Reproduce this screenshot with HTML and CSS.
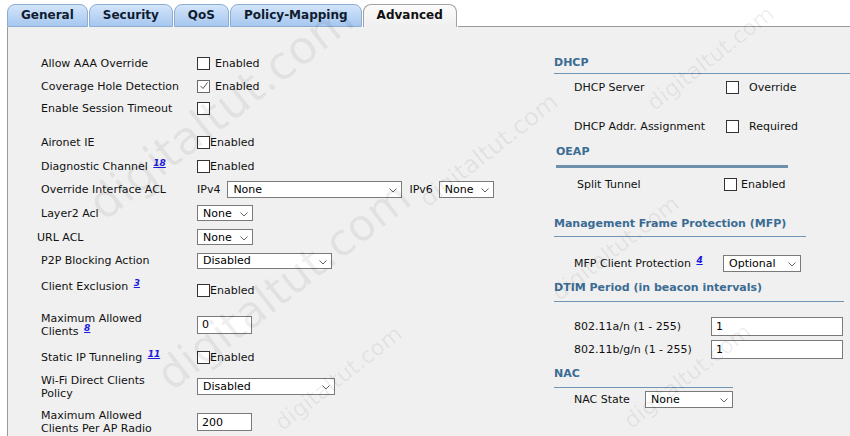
FILE: index.html
```html
<!DOCTYPE html>
<html lang="en">
<head>
    <meta charset="UTF-8">
    <title>WLAN Advanced</title>
    <link rel="stylesheet" href="styles.css">
</head>
<body>
<div class="screen">

    <!-- Tab strip -->
    <div class="tabs">
        <div class="tab">General</div>
        <div class="tab">Security</div>
        <div class="tab">QoS</div>
        <div class="tab">Policy-Mapping</div>
        <div class="tab active">Advanced</div>
        <div class="tab-rest"></div>
    </div>

    <div class="panel">

        <!-- Left column -->
        <div class="col-left">
            <div class="row h23">
                <div class="lbl">Allow AAA Override</div>
                <div class="ctl"><span class="cb"></span><span class="gap5">Enabled</span></div>
            </div>
            <div class="row h22">
                <div class="lbl">Coverage Hole Detection</div>
                <div class="ctl"><span class="cb checked"><svg width="10" height="10" viewBox="0 0 10 10"><path d="M1.5 5 L4 7.5 L8.5 1.5" fill="none" stroke="#555" stroke-width="1"/></svg></span><span class="gap5">Enabled</span></div>
            </div>
            <div class="row h22">
                <div class="lbl">Enable Session Timeout</div>
                <div class="ctl"><span class="cb"></span></div>
            </div>

            <div class="row h23 spaced">
                <div class="lbl">Aironet IE</div>
                <div class="ctl"><span class="cb"></span>Enabled</div>
            </div>
            <div class="row h24">
                <div class="lbl">Diagnostic Channel <a class="ref" href="#">18</a></div>
                <div class="ctl"><span class="cb"></span>Enabled</div>
            </div>
            <div class="row h23">
                <div class="lbl">Override Interface ACL</div>
                <div class="ctl">
                    <span class="tag">IPv4</span>
                    <span class="sel w175"><select><option>None</option></select><svg class="caret" width="8" height="5" viewBox="0 0 8 5"><path d="M0.5 0.5 L4 4 L7.5 0.5" fill="none" stroke="#666"/></svg></span>
                    <span class="tag tag6">IPv6</span>
                    <span class="sel w55"><select><option>None</option></select><svg class="caret" width="8" height="5" viewBox="0 0 8 5"><path d="M0.5 0.5 L4 4 L7.5 0.5" fill="none" stroke="#666"/></svg></span>
                </div>
            </div>
            <div class="row h24">
                <div class="lbl">Layer2 Acl</div>
                <div class="ctl"><span class="sel w56 short"><select><option>None</option></select><svg class="caret" width="8" height="5" viewBox="0 0 8 5"><path d="M0.5 0.5 L4 4 L7.5 0.5" fill="none" stroke="#666"/></svg></span></div>
            </div>
            <div class="row h24">
                <div class="lbl lbl-url">URL ACL</div>
                <div class="ctl"><span class="sel w56 short"><select><option>None</option></select><svg class="caret" width="8" height="5" viewBox="0 0 8 5"><path d="M0.5 0.5 L4 4 L7.5 0.5" fill="none" stroke="#666"/></svg></span></div>
            </div>
            <div class="row h23">
                <div class="lbl">P2P Blocking Action</div>
                <div class="ctl"><span class="sel w135 short"><select><option>Disabled</option></select><svg class="caret" width="8" height="5" viewBox="0 0 8 5"><path d="M0.5 0.5 L4 4 L7.5 0.5" fill="none" stroke="#666"/></svg></span></div>
            </div>
            <div class="row h28">
                <div class="lbl">Client Exclusion <a class="ref" href="#">3</a></div>
                <div class="ctl low"><span class="cb"></span>Enabled</div>
            </div>
            <div class="row h49">
                <div class="lbl">Maximum Allowed<br>Clients <a class="ref" href="#">8</a></div>
                <div class="ctl"><input class="txt w55" type="text" value="0"></div>
            </div>
            <div class="row h16">
                <div class="lbl">Static IP Tunneling <a class="ref" href="#">11</a></div>
                <div class="ctl"><span class="cb"></span>Enabled</div>
            </div>
            <div class="row h43">
                <div class="lbl">Wi-Fi Direct Clients<br>Policy</div>
                <div class="ctl"><span class="sel w138"><select><option>Disabled</option></select><svg class="caret" width="8" height="5" viewBox="0 0 8 5"><path d="M0.5 0.5 L4 4 L7.5 0.5" fill="none" stroke="#666"/></svg></span></div>
            </div>
            <div class="row h28">
                <div class="lbl">Maximum Allowed<br>Clients Per AP Radio</div>
                <div class="ctl"><input class="txt w55" type="text" value="200"></div>
            </div>
        </div>

        <!-- Right column -->
        <div class="col-right">
            <div class="sec-head dhcp">DHCP</div>
            <div class="rrow h26">
                <div class="rlbl w152">DHCP Server</div>
                <span class="cb"></span><span class="gap10">Override</span>
            </div>
            <div class="rrow h26 mt13">
                <div class="rlbl w152">DHCP Addr. Assignment</div>
                <span class="cb"></span><span class="gap10">Required</span>
            </div>

            <div class="sec-head oeap">OEAP</div>
            <div class="rrow h32">
                <div class="rlbl split">Split Tunnel</div>
                <span class="cb"></span><span class="gap4">Enabled</span>
            </div>

            <div class="sec-head mfp">Management Frame Protection (MFP)</div>
            <div class="rrow h26 mt13">
                <div class="rlbl w149">MFP Client Protection <a class="ref" href="#">4</a></div>
                <span class="sel w78"><select><option>Optional</option></select><svg class="caret" width="8" height="5" viewBox="0 0 8 5"><path d="M0.5 0.5 L4 4 L7.5 0.5" fill="none" stroke="#666"/></svg></span>
            </div>

            <div class="sec-head dtim">DTIM Period (in beacon intervals)</div>
            <div class="rrow h19 mt15">
                <div class="rlbl w137">802.11a/n (1 - 255)</div>
                <input class="txt tall w132" type="text" value="1">
            </div>
            <div class="rrow h19 mt4">
                <div class="rlbl w137">802.11b/g/n (1 - 255)</div>
                <input class="txt tall w132" type="text" value="1">
            </div>

            <div class="sec-head nac">NAC</div>
            <div class="rrow h17 mt3">
                <div class="rlbl w71">NAC State</div>
                <span class="sel w88"><select><option>None</option></select><svg class="caret" width="8" height="5" viewBox="0 0 8 5"><path d="M0.5 0.5 L4 4 L7.5 0.5" fill="none" stroke="#666"/></svg></span>
            </div>
        </div>
    </div>

    <!-- site watermark over the capture -->
    <span class="wm wm1">digitaltut.com</span>
    <span class="wm wm2">digitaltut.com</span>
    <span class="wm wm3">digitaltut.com</span>
    <span class="wm wm4">digitaltut.com</span>
    <span class="wm wm5">digitaltut.com</span>
    <span class="wm wm6">digitaltut.com</span>
    <span class="wm wm7">digitaltut.com</span>
</div>
</body>
</html>
```
FILE: styles.css
```css
/* Page base */
body {
    margin: 0;
    background: #fff;
    font-family: "DejaVu Sans", Verdana, sans-serif;
    font-size: 11px;
    color: #111;
}

.screen {
    position: relative;
    width: 850px;
    height: 436px;
    overflow: hidden;
}

/* Tabs */
.tabs {
    display: flex;
    align-items: flex-end;
    height: 27px;
    padding-left: 7px;
}

.tab {
    box-sizing: border-box;
    height: 23px;
    padding: 0 13px;
    margin-right: 1px;
    border: 1px solid #8dadd3;
    border-radius: 8px 8px 0 0;
    background: linear-gradient(#d3e5fa, #a6c7ef);
    font-size: 12px;
    font-weight: bold;
    line-height: 21px;
    color: #101c30;
}

.tab.active {
    border-color: #a3a3a3;
    border-bottom: none;
    background: linear-gradient(#fbfbfb, #f0f0f0);
    color: #111;
}

.tab-rest {
    flex: 1;
    border-bottom: 1px solid #9a9a9a;
}

/* Panel */
.panel {
    display: flex;
    height: 409px;
    margin-left: 7px;
    border-left: 1px solid #9a9a9a;
    background: #f0f0f0;
}

.col-left {
    width: 540px;
    padding-top: 25px;
}

.col-right {
    flex: 1;
    padding-top: 29px;
    padding-left: 6px;
}

/* Left form rows */
.row {
    display: flex;
    align-items: center;
    padding-left: 33px;
}

.row .lbl {
    width: 156px;
    line-height: 13px;
}

.row .lbl-url {
    margin-left: -4px;
    width: 160px;
}

.row .ctl {
    display: flex;
    align-items: center;
}

.row .ctl.low {
    margin-top: 9px;
}

.row.spaced { margin-top: 12px; }

.h16 { height: 16px; }
.h17 { height: 17px; }
.h19 { height: 19px; }
.h22 { height: 22px; }
.h23 { height: 23px; }
.h24 { height: 24px; }
.h26 { height: 26px; }
.h28 { height: 28px; }
.h32 { height: 32px; }
.h43 { height: 43px; }
.h49 { height: 49px; }

.gap4 { margin-left: 4px; }
.gap5 { margin-left: 5px; }
.gap10 { margin-left: 10px; }

/* footnote links */
.ref {
    font-size: 9px;
    font-weight: bold;
    font-style: italic;
    color: #1a1adf;
    vertical-align: 4px;
    line-height: 0;
    margin-left: 2px;
}

/* Checkbox */
.cb {
    display: inline-flex;
    align-items: center;
    justify-content: center;
    box-sizing: border-box;
    width: 13px;
    height: 13px;
    border: 1px solid #333;
    background: #fff;
}

.cb.checked {
    border-color: #6a6a6a;
}

/* Select boxes */
.sel {
    position: relative;
    display: inline-block;
    height: 17px;
}

.sel.short { height: 16px; }

.sel select {
    appearance: none;
    -webkit-appearance: none;
    box-sizing: border-box;
    width: 100%;
    height: 100%;
    margin: 0;
    padding: 0 0 0 5px;
    border: 1px solid #7a7a7a;
    border-radius: 0;
    background: #fff;
    font-family: inherit;
    font-size: 11px;
    color: #000;
}

.sel .caret {
    position: absolute;
    right: 5px;
    top: 7px;
}

.w55 { width: 55px; }
.w56 { width: 56px; }
.w78 { width: 78px; }
.w88 { width: 88px; }
.w132 { width: 132px; }
.w135 { width: 135px; }
.w138 { width: 138px; }
.w175 { width: 175px; }

.tag { margin-right: 7px; }
.tag6 { margin-left: 7px; margin-right: 6px; }

/* Text inputs */
.txt {
    box-sizing: border-box;
    height: 18px;
    margin: 0;
    padding: 0 4px;
    border: 1px solid #7a7a7a;
    background: #fff;
    font-family: inherit;
    font-size: 11px;
    color: #000;
}

.txt.tall { height: 19px; }

/* Right side sections */
.sec-head {
    font-weight: bold;
    line-height: 14px;
    color: #3b6c93;
    border-bottom: 1px solid #7094b1;
}

.sec-head.dhcp {
    padding-bottom: 3px;
    margin-right: -10px;
}

.sec-head.oeap {
    width: 232px;
    margin: 6px 0 0 2px;
    padding-bottom: 6px;
    border-bottom: 3px solid #6d90ac;
}

.sec-head.mfp {
    width: 252px;
    margin-top: 17px;
    padding-bottom: 5px;
}

.sec-head.dtim {
    width: 290px;
    margin-top: 5px;
    padding-bottom: 6px;
}

.sec-head.nac {
    width: 179px;
    margin-top: 8px;
    padding-bottom: 6px;
}

.rrow {
    display: flex;
    align-items: center;
    padding-left: 20px;
}

.rlbl { flex: none; }
.rlbl.split { width: 147px; padding-left: 3px; }
.w71 { width: 71px; }
.w137 { width: 137px; }
.w149 { width: 149px; }
.w152 { width: 152px; }

.mt3 { margin-top: 3px; }
.mt4 { margin-top: 4px; }
.mt13 { margin-top: 13px; }
.mt15 { margin-top: 15px; }

/* Watermark */
.wm {
    position: absolute;
    white-space: nowrap;
    line-height: 1;
    color: rgba(0, 0, 0, 0.07);
    font-family: "DejaVu Sans", Verdana, sans-serif;
    transform-origin: 0 85%;
    transform: rotate(-38deg);
    pointer-events: none;
}

.wm1 { left: 104px; top: 183px; font-size: 46px; }
.wm2 { left: 172px; top: 355px; font-size: 44px; }
.wm3 { left: 428px; top: 188px; font-size: 24px; }
.wm4 { left: 655px; top: 93px; font-size: 22px; }
.wm5 { left: 283px; top: 413px; font-size: 22px; }
.wm6 { left: 632px; top: 411px; font-size: 22px; }
.wm7 { left: 560px; top: 283px; font-size: 22px; }
```
